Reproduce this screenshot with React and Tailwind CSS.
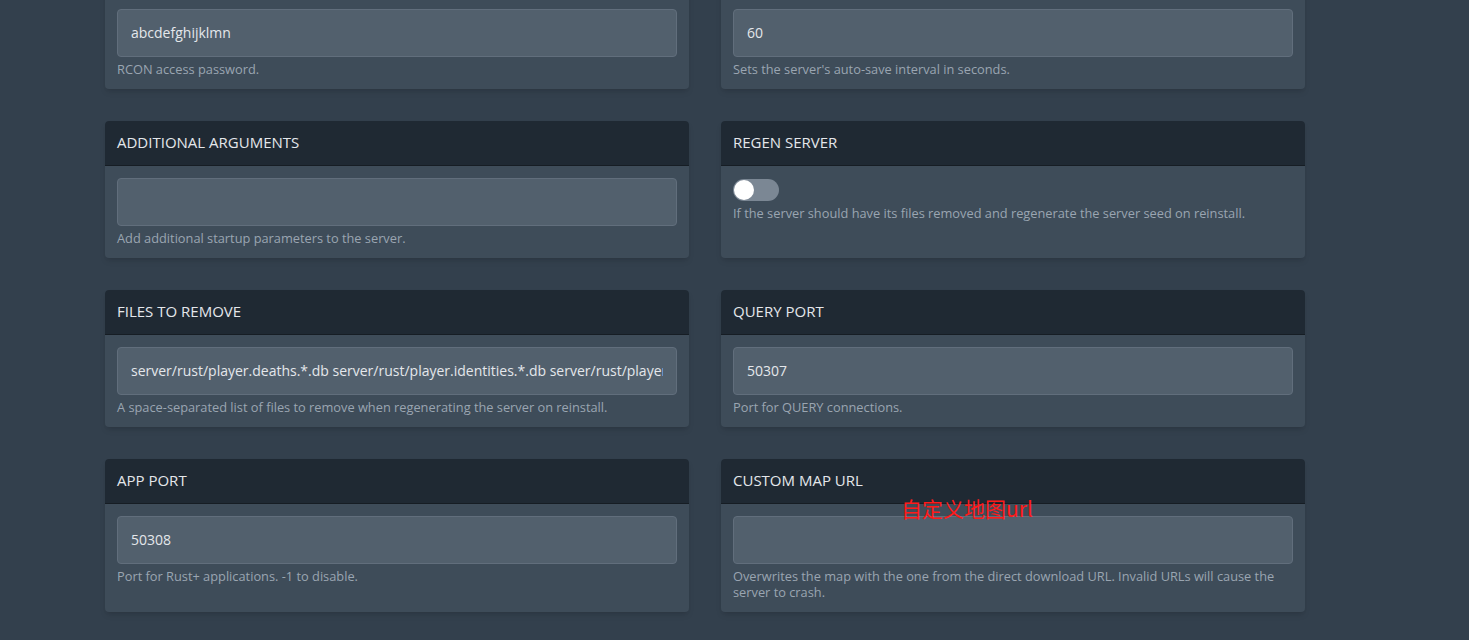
import React from "react";

const font = { fontFamily: '"Open Sans", "Noto Sans", Arial, sans-serif' };

function Card({ title, children }) {
  return (
    <div className="flex flex-col rounded bg-[#3e4c59] shadow-md">
      <div className="flex h-[45px] items-center rounded-t border-b border-[#161d24] bg-[#1f2933] px-3 pb-[2px] text-[15px] text-[#e4e7eb]">
        {title}
      </div>
      <div className="px-3 pb-3 pt-3">{children}</div>
    </div>
  );
}

function Desc({ children }) {
  return <p className="mt-1 text-[12.8px] leading-4 text-[#9aa5b1]">{children}</p>;
}

function Field({ value, desc }) {
  return (
    <>
      <input
        readOnly
        value={value}
        className="block h-[48px] w-full rounded border border-[#616e7c] bg-[#52606d] px-[13px] pb-[2px] text-[14px] text-[#e4e7eb] outline-none"
        style={font}
      />
      <Desc>{desc}</Desc>
    </>
  );
}

export default function App() {
  return (
    <div className="min-h-[640px] w-full overflow-hidden bg-[#33404d]" style={font}>
      <div className="ml-[105px] mt-[-48px] grid w-[1200px] grid-cols-2 gap-8 pb-8">
        <Card title="RCON PASSWORD">
          <Field value="abcdefghijklmn" desc="RCON access password." />
        </Card>
        <Card title="SAVE INTERVAL">
          <Field value="60" desc="Sets the server's auto-save interval in seconds." />
        </Card>

        <Card title="ADDITIONAL ARGUMENTS">
          <Field value="" desc="Add additional startup parameters to the server." />
        </Card>
        <Card title="REGEN SERVER">
          <div className="mt-px flex h-[22px] w-[46px] items-center rounded-full bg-[#7b8794] px-px">
            <div className="h-[20px] w-[20px] rounded-full bg-white" />
          </div>
          <Desc>
            If the server should have its files removed and regenerate the server seed on reinstall.
          </Desc>
        </Card>

        <Card title="FILES TO REMOVE">
          <Field
            value="server/rust/player.deaths.*.db server/rust/player.identities.*.db server/rust/player.states.*.db server/rust/player.tokens.*.db"
            desc="A space-separated list of files to remove when regenerating the server on reinstall."
          />
        </Card>
        <Card title="QUERY PORT">
          <Field value="50307" desc="Port for QUERY connections." />
        </Card>

        <Card title="APP PORT">
          <Field value="50308" desc="Port for Rust+ applications. -1 to disable." />
        </Card>
        <div className="relative">
          <Card title="CUSTOM MAP URL">
            <Field
              value=""
              desc="Overwrites the map with the one from the direct download URL. Invalid URLs will cause the server to crash."
            />
          </Card>
          <span
            className="absolute left-[180px] top-[39px] text-[21px] leading-none text-[#ff1a1a]"
            style={{ fontFamily: '"Noto Sans CJK SC", "Noto Sans", sans-serif' }}
          >
            自定义地图url
          </span>
        </div>
      </div>
    </div>
  );
}
